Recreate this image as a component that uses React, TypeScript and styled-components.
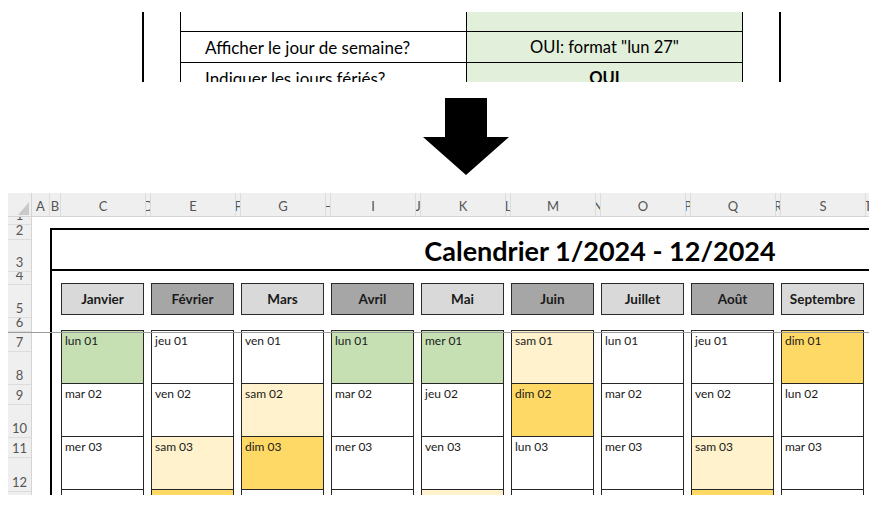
import React from "react";
import styled, { createGlobalStyle } from "styled-components";

const GlobalStyle = createGlobalStyle`
  html, body {
    margin: 0;
    padding: 0;
    background: #fff;
  }
  body {
    width: 881px;
    height: 510px;
    overflow: hidden;
    font-family: Lato, "Liberation Sans", sans-serif;
    color: #000;
  }
`;

const Page = styled.div`
  display: flex;
  flex-direction: column;
  align-items: flex-start;
  width: 881px;
  height: 510px;
`;

/* ---- settings snippet at the top ---- */

const Snippet = styled.div`
  margin: 12px 0 0 142px;
  width: 599px;
  height: 70px;
  overflow: hidden;
  border-left: 2px solid #000;
  border-right: 2px solid #000;
  padding-left: 36px;
`;

const SettingsTable = styled.div`
  width: 562px;
  border-left: 1px solid #000;
`;

const SettingRow = styled.div<{ $h: number }>`
  display: grid;
  grid-template-columns: 286px 276px;
  height: ${p => p.$h}px;
  border-bottom: 1px solid #000;
  box-sizing: border-box;
`;

const SettingLabel = styled.div`
  display: flex;
  align-items: center;
  padding-left: 24px;
  border-right: 1px solid #000;
  font-size: 17px;
`;

const SettingValue = styled.div<{ $bold?: boolean }>`
  display: flex;
  align-items: center;
  justify-content: center;
  background: #e2efda;
  border-right: 1px solid #000;
  font-size: 16.5px;
  font-weight: ${p => (p.$bold ? 700 : 400)};
`;

/* ---- arrow ---- */

const ArrowIcon = styled.svg`
  display: block;
  margin: 16px 0 0 423px;
`;

/* ---- spreadsheet ---- */

const Sheet = styled.div`
  position: relative;
  margin: 18px 0 0 8px;
  width: 861px;
  height: 302px;
  display: grid;
  grid-template-columns: 24px 837px;
  grid-template-rows: 24px 278px;
  overflow: hidden;
  background: #fff;
`;

const Corner = styled.div`
  display: flex;
  align-items: flex-end;
  justify-content: flex-end;
  padding: 0 2px 1px 0;
  box-sizing: border-box;
  background: #efefef;
  border-right: 1px solid #d4d4d4;
  border-bottom: 1px solid #d4d4d4;
`;

const ColHeader = styled.div`
  display: flex;
  overflow: hidden;
  background: #efefef;
  border-bottom: 1px solid #d4d4d4;
`;

const ColCell = styled.div<{ $w: number }>`
  flex: none;
  width: ${p => p.$w}px;
  box-sizing: border-box;
  display: flex;
  align-items: flex-end;
  justify-content: center;
  padding-bottom: 3px;
  overflow: hidden;
  border-right: 1px solid #dcdcdc;
  font-size: 13px;
  line-height: 14px;
  color: #555;
`;

const RowHeader = styled.div`
  display: flex;
  flex-direction: column;
  overflow: hidden;
  background: #efefef;
  border-right: 1px solid #d4d4d4;
`;

const RowCell = styled.div<{ $h: number }>`
  flex: none;
  height: ${p => p.$h}px;
  box-sizing: border-box;
  display: flex;
  align-items: flex-end;
  justify-content: center;
  padding-bottom: 2px;
  overflow: hidden;
  border-bottom: 1px solid #dcdcdc;
  font-size: 13px;
  line-height: 14px;
  color: #555;
`;

const FreezeLine = styled.div`
  position: absolute;
  left: 0;
  right: 0;
  top: 139px;
  height: 1px;
  background: #9c9c9c;
  z-index: 2;
`;

const Content = styled.div`
  overflow: hidden;
`;

const Frame = styled.div`
  width: 1096px;
  margin: 11px 0 0 18px;
  border-left: 2px solid #000;
  border-top: 2px solid #000;
`;

const TitleRow = styled.div`
  height: 41px;
  display: flex;
  align-items: center;
  justify-content: center;
  padding-top: 2px;
  box-sizing: border-box;
  border-bottom: 2px solid #000;
  font-size: 27px;
  font-weight: 700;
`;

const MonthRow = styled.div`
  display: flex;
  gap: 7px;
  padding: 12px 0 0 9px;
`;

const MonthButton = styled.div<{ $dark: boolean }>`
  flex: none;
  width: 83px;
  height: 32px;
  box-sizing: border-box;
  display: flex;
  align-items: center;
  justify-content: center;
  border: 1px solid #2b2b2b;
  background: ${p => (p.$dark ? "#a6a6a6" : "#d9d9d9")};
  font-size: 13.5px;
  font-weight: 700;
  color: #1a1a1a;
`;

const DayGrid = styled.div`
  display: flex;
  gap: 7px;
  margin-top: 15px;
  padding-left: 9px;
`;

const MonthColumn = styled.div`
  flex: none;
  width: 83px;
  display: flex;
  flex-direction: column;
`;

const DayCell = styled.div<{ $bg: string }>`
  height: 54px;
  box-sizing: border-box;
  border: 1px solid #262626;
  background: ${p => p.$bg};
  padding: 3px 3px;
  font-size: 12px;
  line-height: 14px;
  color: #1a1a1a;

  & + & {
    margin-top: -1px;
  }
`;

const MONTHS = [
  "Janvier",
  "Février",
  "Mars",
  "Avril",
  "Mai",
  "Juin",
  "Juillet",
  "Août",
  "Septembre",
  "Octobre",
  "Novembre",
  "Décembre"
];

const WEEKDAYS = ["dim", "lun", "mar", "mer", "jeu", "ven", "sam"];

// jours fériés parmi les premiers jours du mois
const HOLIDAYS = ["0-1", "3-1", "4-1", "10-1"];

const COLUMNS: { label: string; width: number }[] = [
  { label: "A", width: 18 },
  { label: "B", width: 11 },
  ...Array.from({ length: 24 }, (_, i) => ({
    label: String.fromCharCode(67 + i),
    width: i % 2 === 0 ? 85 : 5
  }))
];

const ROWS = [8, 15, 32, 13, 33, 14, 20, 33, 20, 33, 20, 34, 20];

const dayInfo = (month: number, day: number) => {
  const weekday = new Date(2024, month, day).getDay();
  let bg = "#ffffff";
  if (HOLIDAYS.includes(`${month}-${day}`)) bg = "#c6e0b4";
  else if (weekday === 6) bg = "#fff2cc";
  else if (weekday === 0) bg = "#ffd966";
  return { text: `${WEEKDAYS[weekday]} ${String(day).padStart(2, "0")}`, bg };
};

const App = () => {
  return (
    <Page>
      <GlobalStyle />
      <Snippet>
        <SettingsTable>
          <SettingRow $h={20}>
            <SettingLabel />
            <SettingValue />
          </SettingRow>
          <SettingRow $h={31}>
            <SettingLabel>Afficher le jour de semaine?</SettingLabel>
            <SettingValue>OUI: format "lun 27"</SettingValue>
          </SettingRow>
          <SettingRow $h={31}>
            <SettingLabel>Indiquer les jours fériés?</SettingLabel>
            <SettingValue $bold>OUI</SettingValue>
          </SettingRow>
        </SettingsTable>
      </Snippet>

      <ArrowIcon width="86" height="77" viewBox="0 0 86 77">
        <polygon points="22,0 64,0 64,39 86,39 43,77 0,39 22,39" fill="#000" />
      </ArrowIcon>

      <Sheet>
        <Corner>
          <svg width="11" height="13" viewBox="0 0 11 13">
            <polygon points="11,0 11,13 0,13" fill="#c9c9c9" />
          </svg>
        </Corner>
        <ColHeader>
          {COLUMNS.map(c => (
            <ColCell key={c.label} $w={c.width}>
              {c.label}
            </ColCell>
          ))}
        </ColHeader>
        <RowHeader>
          {ROWS.map((h, i) => (
            <RowCell key={i} $h={h}>
              {i + 1}
            </RowCell>
          ))}
        </RowHeader>
        <Content>
          <Frame>
            <TitleRow>Calendrier 1/2024 - 12/2024</TitleRow>
            <MonthRow>
              {MONTHS.map((m, i) => (
                <MonthButton key={m} $dark={i % 2 === 1}>
                  {m}
                </MonthButton>
              ))}
            </MonthRow>
            <DayGrid>
              {MONTHS.map((m, month) => (
                <MonthColumn key={m}>
                  {[1, 2, 3, 4].map(day => {
                    const d = dayInfo(month, day);
                    return (
                      <DayCell key={day} $bg={d.bg}>
                        {d.text}
                      </DayCell>
                    );
                  })}
                </MonthColumn>
              ))}
            </DayGrid>
          </Frame>
        </Content>
        <FreezeLine />
      </Sheet>
    </Page>
  );
};

export default App;
